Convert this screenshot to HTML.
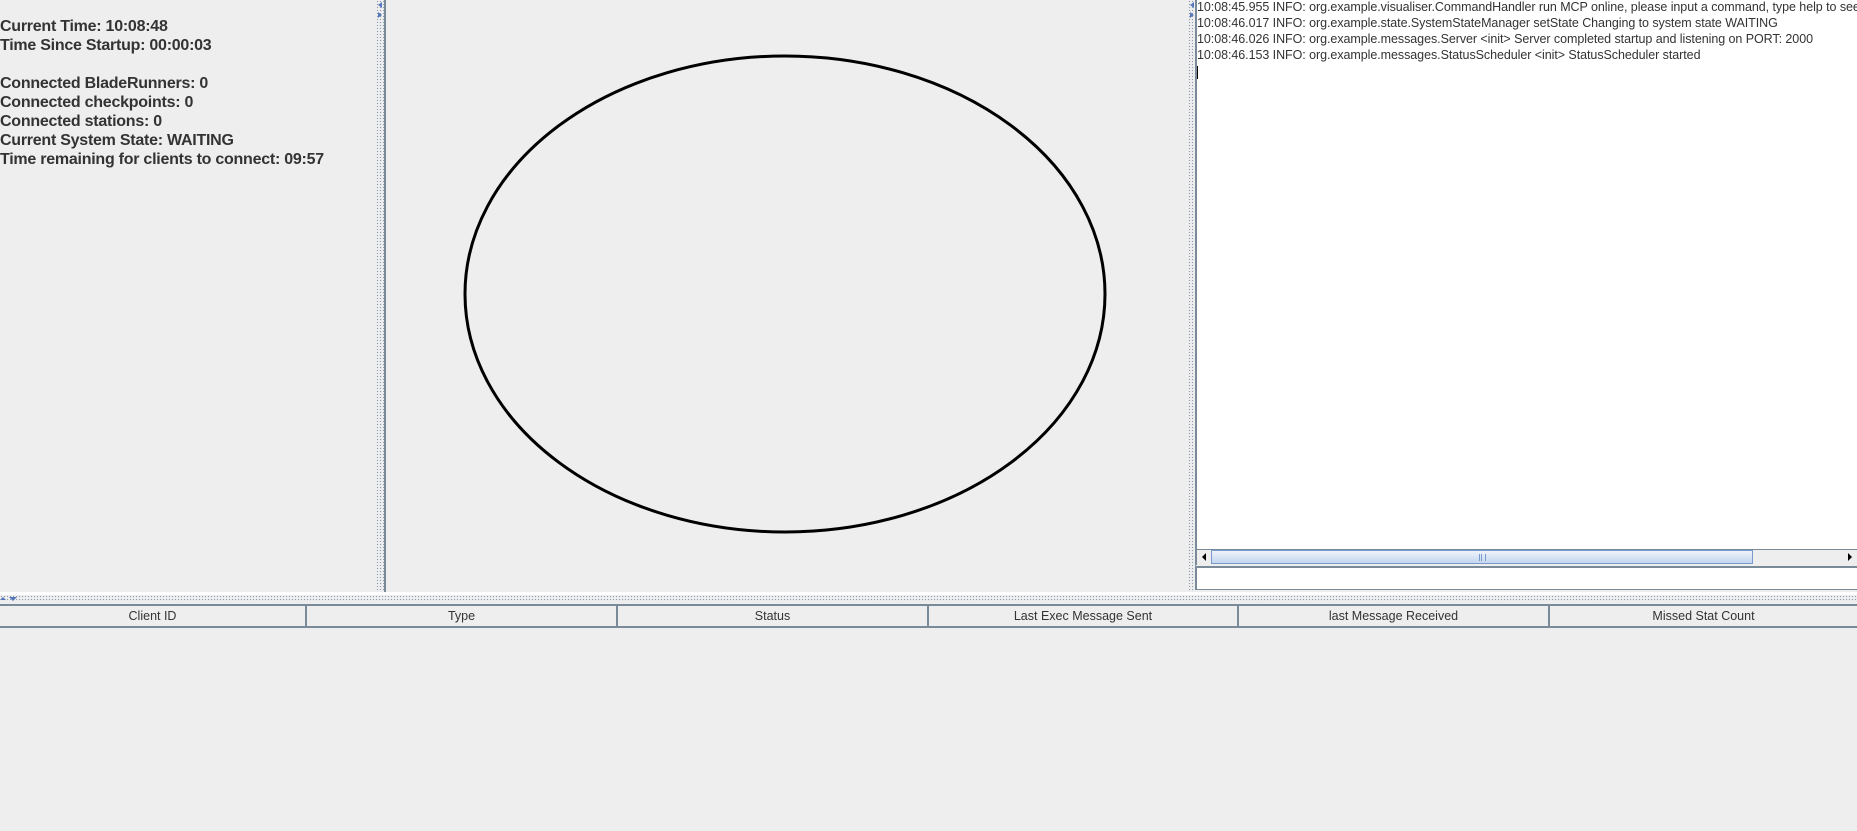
<!DOCTYPE html>
<html><head><style>
body{margin:0;width:1857px;height:831px;background:#eeeeee;position:relative;overflow:hidden;font-family:"Liberation Sans",sans-serif;}
.a{position:absolute;}
.lt{left:0;font-weight:bold;font-size:16px;letter-spacing:-0.25px;color:#333;white-space:nowrap;line-height:19px;}
.log{left:1197px;font-size:12.5px;letter-spacing:-0.06px;color:#333;white-space:nowrap;line-height:16px;top:-1px;}
.dots{background-image:radial-gradient(#8c9cb0 0.7px,transparent 0.8px);background-size:3px 3px;}
.hd{top:604px;height:20px;border-bottom:2px solid #7a8a99;border-top:2px solid #7a8a99;}
.col{position:absolute;top:0;height:20px;font-size:12.5px;color:#333;text-align:center;line-height:20px;border-right:2px solid #7a8a99;box-sizing:border-box;}
</style></head><body>
<div class="a lt" style="top:17px">Current Time: 10:08:48<br>Time Since Startup: 00:00:03<br><br>Connected BladeRunners: 0<br>Connected checkpoints: 0<br>Connected stations: 0<br>Current System State: WAITING<br>Time remaining for clients to connect: 09:57</div>
<div class="a dots" style="left:376px;top:0;width:8px;height:592px"></div>
<div class="a" style="left:384px;top:0;width:2px;height:592px;background:#7a8a99"></div>
<svg class="a" style="left:376px;top:0" width="8" height="22"><polygon points="6,2 2,5 6,8" fill="#5577bb"/><polygon points="2,12 6,15 2,18" fill="#5577bb"/></svg>
<svg class="a" style="left:386px;top:0" width="802" height="592"><ellipse cx="399" cy="294" rx="320" ry="238" fill="none" stroke="#000" stroke-width="3"/></svg>
<div class="a dots" style="left:1188px;top:0;width:8px;height:592px"></div>
<svg class="a" style="left:1188px;top:0" width="8" height="22"><polygon points="6,2 2,5 6,8" fill="#5577bb"/><polygon points="2,12 6,15 2,18" fill="#5577bb"/></svg>
<div class="a" style="left:1195px;top:0;width:662px;height:549px;background:#fff;border-left:2px solid #7a8a99"></div>
<div class="a log">10:08:45.955 INFO: org.example.visualiser.CommandHandler run MCP online, please input a command, type help to see<br>10:08:46.017 INFO: org.example.state.SystemStateManager setState Changing to system state WAITING<br>10:08:46.026 INFO: org.example.messages.Server &lt;init&gt; Server completed startup and listening on PORT: 2000<br>10:08:46.153 INFO: org.example.messages.StatusScheduler &lt;init&gt; StatusScheduler started</div>
<div class="a" style="left:1197px;top:66px;width:1px;height:13px;background:#000"></div>
<div class="a" style="left:1195px;top:549px;width:662px;height:16px;background:#eee;border-top:1px solid #7a8a99;border-left:2px solid #7a8a99;box-sizing:border-box"></div>
<svg class="a" style="left:1199px;top:551px" width="10" height="12"><polygon points="7,2 3,6 7,10" fill="#000"/></svg>
<div class="a" style="left:1211px;top:550px;width:542px;height:14px;background:linear-gradient(#eef3fb,#c4d6ee);border:1px solid #7a99cc;box-sizing:border-box"></div>
<div class="a" style="left:1479px;top:554px;width:5px;height:7px;border-left:1px solid #7a99cc;border-right:1px solid #7a99cc"></div>
<div class="a" style="left:1481px;top:554px;width:1px;height:7px;background:#7a99cc"></div>
<svg class="a" style="left:1845px;top:551px" width="10" height="12"><polygon points="3,2 7,6 3,10" fill="#000"/></svg>
<div class="a" style="left:1195px;top:566px;width:662px;height:24px;background:#fff;border-top:2px solid #7a8a99;border-left:2px solid #7a8a99;border-bottom:1px solid #7a8a99;box-sizing:border-box"></div>
<div class="a" style="left:0;top:592px;width:1857px;height:3px;background:#fff"></div>
<div class="a dots" style="left:0;top:595px;width:1857px;height:7px"></div>
<svg class="a" style="left:0;top:594px" width="22" height="8"><polygon points="0,6 3,3 6,6" fill="#5577bb"/><polygon points="9,3 17,3 13,7" fill="#5577bb"/></svg>
<div class="a hd" style="left:0;width:1857px">
<div class="col" style="left:0;width:307px">Client ID</div>
<div class="col" style="left:307px;width:311px">Type</div>
<div class="col" style="left:618px;width:311px">Status</div>
<div class="col" style="left:929px;width:310px">Last Exec Message Sent</div>
<div class="col" style="left:1239px;width:311px">last Message Received</div>
<div class="col" style="left:1550px;width:307px;border-right:none">Missed Stat Count</div>
</div>
</body></html>
